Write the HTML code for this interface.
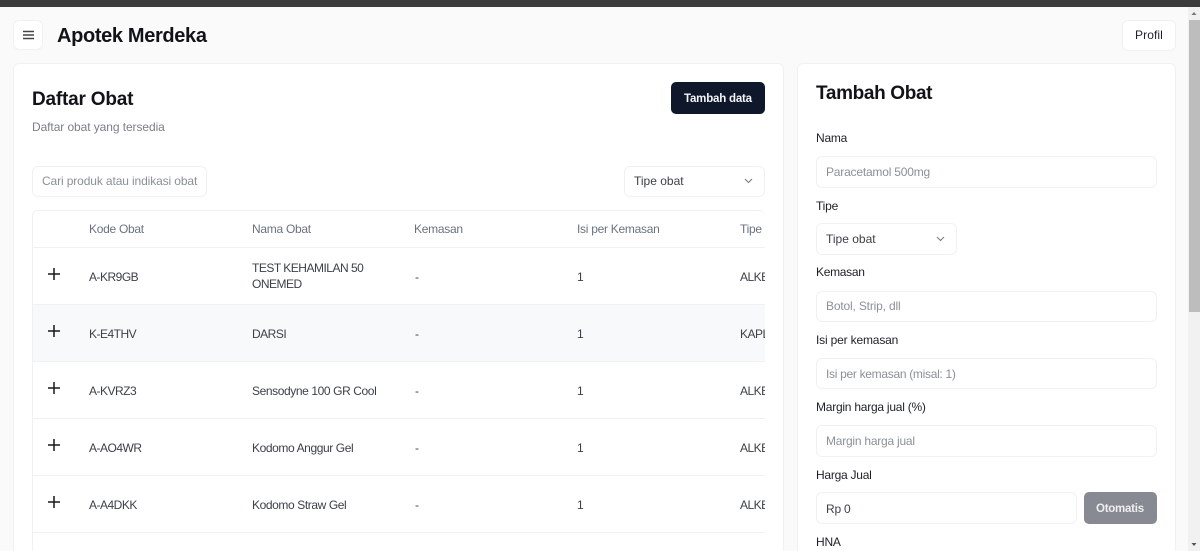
<!DOCTYPE html>
<html><head><meta charset="utf-8"><style>
*{box-sizing:border-box}
html,body{margin:0;padding:0;width:1200px;height:551px;overflow:hidden;background:#fafafa;font-family:"Liberation Sans",sans-serif}
#r{position:relative;width:1200px;height:551px;overflow:hidden}
.b{position:absolute;background:#fff;border:1px solid #f0f1f3;border-radius:6px}
.t{position:absolute;white-space:nowrap;font-size:12px;line-height:16px;color:#3c4048;letter-spacing:-.22px}
.h{color:#6b7280;letter-spacing:-.28px}
.p{color:#8b9098;letter-spacing:-.2px}
.l{color:#1d2027}
.c{letter-spacing:-.5px}
.n{letter-spacing:-.4px}
.s{position:absolute;left:0;width:100%}
</style></head><body><div id="r">
<div style="position:absolute;left:0;top:0;width:1200px;height:7px;background:#3b3b3b"></div>
<div style="position:absolute;left:1188px;top:7px;width:12px;height:544px;background:#f1f1f1"></div>
<div style="position:absolute;left:1189px;top:20px;width:11px;height:292px;background:#bdbdbd"></div>
<svg style="position:absolute;left:1188px;top:7px" width="12" height="12"><path d="M3.500 8L6 5l2.500 3z" fill="#777"/></svg>
<svg style="position:absolute;left:1188px;top:539px" width="12" height="12"><path d="M3.500 4L6 7l2.500-3z" fill="#555"/></svg>

<div class="b" style="left:13px;top:20px;width:30px;height:30px"></div>
<svg style="position:absolute;left:23px;top:30px" width="11" height="10"><path d="M0 1.500h11M0 5h11M0 8.500h11" stroke="#444" stroke-width="1.400"/></svg>
<div class="t" style="left:57px;top:24px;font-size:20px;line-height:24px;font-weight:700;color:#111318;letter-spacing:-.35px">Apotek Merdeka</div>
<div class="b" style="left:1122px;top:20px;width:54px;height:31px"></div>
<div class="t l" style="left:1135px;top:27px;letter-spacing:.1px">Profil</div>

<div class="b" style="left:13px;top:63px;width:771px;height:500px"></div>
<div class="t" style="left:32px;top:88px;font-size:19px;line-height:24px;font-weight:700;color:#111318;letter-spacing:-.2px">Daftar Obat</div>
<div class="t h" style="left:32px;top:119px;letter-spacing:-.08px;color:#7b8088">Daftar obat yang tersedia</div>
<div style="position:absolute;left:671px;top:82px;width:94px;height:32px;background:#0f172a;border-radius:5px"></div>
<div class="t" style="left:684px;top:91px;font-weight:700;font-size:11.5px;color:#f3f4f6;letter-spacing:-.2px">Tambah data</div>
<div class="b" style="left:32px;top:166px;width:175px;height:31px"></div>
<div class="t p" style="left:42px;top:173px;letter-spacing:-.12px">Cari produk atau indikasi obat</div>
<div class="b" style="left:624px;top:166px;width:141px;height:31px"></div>
<div class="t" style="left:634px;top:173px;letter-spacing:0">Tipe obat</div>
<svg style="position:absolute;left:744px;top:178px" width="9" height="6"><path d="M1 1l3.500 3.500L8 1" fill="none" stroke="#777" stroke-width="1"/></svg>

<div class="b" style="left:32px;top:210px;width:733px;height:360px;overflow:hidden;border-right:0">
<div class="s" style="top:36px;height:1px;background:#f0f1f3"></div>
<div class="s" style="top:93px;height:58px;background:#f8f9fa;border-top:1px solid #f0f1f3"></div>
<div class="s" style="top:150px;height:1px;background:#f0f1f3"></div>
<div class="s" style="top:207px;height:1px;background:#f0f1f3"></div>
<div class="s" style="top:264px;height:1px;background:#f0f1f3"></div>
<div class="s" style="top:321px;height:1px;background:#f0f1f3"></div>
<div class="t h" style="left:56px;top:10px">Kode Obat</div>
<div class="t h" style="left:219px;top:10px">Nama Obat</div>
<div class="t h" style="left:381px;top:10px">Kemasan</div>
<div class="t h" style="left:544px;top:10px">Isi per Kemasan</div>
<div class="t h" style="left:707px;top:10px">Tipe</div>

<div class="t c" style="left:56px;top:58px">A-KR9GB</div>
<div class="t c" style="left:219px;top:49px">TEST KEHAMILAN 50</div>
<div class="t c" style="left:219px;top:65px">ONEMED</div>
<div class="t" style="left:382px;top:58px">-</div>
<div class="t" style="left:544px;top:58px">1</div>
<div class="t c" style="left:707px;top:58px">ALKES</div>

<div class="t c" style="left:56px;top:115px">K-E4THV</div>
<div class="t c" style="left:219px;top:115px">DARSI</div>
<div class="t" style="left:382px;top:115px">-</div>
<div class="t" style="left:544px;top:115px">1</div>
<div class="t c" style="left:707px;top:115px">KAPLET</div>

<div class="t c" style="left:56px;top:172px">A-KVRZ3</div>
<div class="t n" style="left:219px;top:172px">Sensodyne 100 GR Cool</div>
<div class="t" style="left:382px;top:172px">-</div>
<div class="t" style="left:544px;top:172px">1</div>
<div class="t c" style="left:707px;top:172px">ALKES</div>

<div class="t c" style="left:56px;top:229px">A-AO4WR</div>
<div class="t n" style="left:219px;top:229px">Kodomo Anggur Gel</div>
<div class="t" style="left:382px;top:229px">-</div>
<div class="t" style="left:544px;top:229px">1</div>
<div class="t c" style="left:707px;top:229px">ALKES</div>

<div class="t c" style="left:56px;top:286px">A-A4DKK</div>
<div class="t n" style="left:219px;top:286px">Kodomo Straw Gel</div>
<div class="t" style="left:382px;top:286px">-</div>
<div class="t" style="left:544px;top:286px">1</div>
<div class="t c" style="left:707px;top:286px">ALKES</div>
</div>

<svg style="position:absolute;left:47px;top:266px" width="14" height="244"><g fill="none" stroke="#17191e" stroke-width="1.500"><path d="M1 8h12M7 2v12"/><path d="M1 65h12M7 59v12"/><path d="M1 122h12M7 116v12"/><path d="M1 179h12M7 173v12"/><path d="M1 236h12M7 230v12"/></g></svg>

<div class="b" style="left:797px;top:63px;width:379px;height:500px"></div>
<div class="t" style="left:816px;top:82px;font-size:19px;line-height:24px;font-weight:700;color:#111318;letter-spacing:-.35px">Tambah Obat</div>
<div class="t l" style="left:816px;top:130px">Nama</div>
<div class="b" style="left:816px;top:156px;width:341px;height:32px"></div>
<div class="t p" style="left:826px;top:164px">Paracetamol 500mg</div>
<div class="t l" style="left:816px;top:198px">Tipe</div>
<div class="b" style="left:816px;top:223px;width:141px;height:32px"></div>
<div class="t" style="left:826px;top:231px;letter-spacing:0">Tipe obat</div>
<svg style="position:absolute;left:936px;top:236px" width="9" height="6"><path d="M1 1l3.500 3.500L8 1" fill="none" stroke="#777" stroke-width="1"/></svg>
<div class="t l" style="left:816px;top:264px;letter-spacing:-.3px">Kemasan</div>
<div class="b" style="left:816px;top:291px;width:341px;height:31px"></div>
<div class="t p" style="left:826px;top:298px;letter-spacing:-.17px">Botol, Strip, dll</div>
<div class="t l" style="left:816px;top:332px;letter-spacing:-.17px">Isi per kemasan</div>
<div class="b" style="left:816px;top:358px;width:341px;height:31px"></div>
<div class="t p" style="left:826px;top:366px;letter-spacing:-.3px">Isi per kemasan (misal: 1)</div>
<div class="t l" style="left:816px;top:399px;letter-spacing:-.24px">Margin harga jual (%)</div>
<div class="b" style="left:816px;top:425px;width:341px;height:32px"></div>
<div class="t p" style="left:826px;top:433px;letter-spacing:-.23px">Margin harga jual</div>
<div class="t l" style="left:816px;top:467px;letter-spacing:-.25px">Harga Jual</div>
<div class="b" style="left:816px;top:492px;width:261px;height:32px"></div>
<div class="t" style="left:826px;top:501px">Rp 0</div>
<div style="position:absolute;left:1084px;top:492px;width:73px;height:32px;background:#878a92;border-radius:5px"></div>
<div class="t" style="left:1096px;top:501px;font-weight:700;font-size:11.5px;color:#eceef0;letter-spacing:-.25px">Otomatis</div>
<div class="t l" style="left:816px;top:534px">HNA</div>
</div></body></html>
